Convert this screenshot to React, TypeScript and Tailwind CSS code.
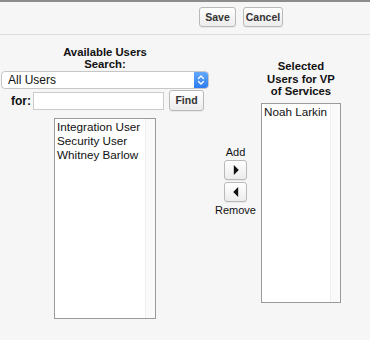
import React from "react";

const btn =
  "rounded-[3px] border border-[#b9b9b9] bg-gradient-to-b from-white to-[#ececec] text-[#333] font-bold text-[10.5px] leading-none flex items-center justify-center shadow-[0_1px_0_rgba(0,0,0,0.05)]";

function ListBox({ w, h, items }: { w: string; h: string; items: string[] }) {
  return (
    <div className={`${w} ${h} border border-[#9a9a9a] bg-white flex`}>
      <div className="flex-1 pl-[2px] pt-[1px] text-[11.7px] leading-[14px] text-[#111]">
        {items.map((t) => (
          <div key={t}>{t}</div>
        ))}
      </div>
      <div className="w-[10px] border-l border-[#efefef] bg-[#fafafa]" />
    </div>
  );
}

export default function App() {
  return (
    <div className="w-[370px] h-[340px] bg-[#f7f6f7] font-['Liberation_Sans',Arial,sans-serif] text-[#222] overflow-hidden">
      <div className="h-[2px] bg-[#8c8c8c]" />
      <div className="h-[33px] border-b border-[#dcdcdc] flex items-start pt-[5px] pl-[199px] gap-[7px]">
        <button className={`${btn} w-[37px] h-[20px]`}>Save</button>
        <button className={`${btn} w-[40px] h-[20px]`}>Cancel</button>
      </div>

      <div className="flex items-start mt-[11px]">
        {/* Left column */}
        <div className="w-[210px] flex flex-col items-center">
          <div className="text-[11.3px] font-bold leading-[12px] text-center text-[#111]">
            Available Users
            <br />
            Search:
          </div>
          <div className="w-full pl-[1px] pr-[1px] mt-[1px]">
            <div className="h-[18px] rounded-[4px] border border-[#c6c6c6] bg-white flex items-stretch overflow-hidden">
              <div className="flex-1 pl-[6px] text-[12px] leading-[16px] text-[#111]">All Users</div>
              <div className="w-[14px] bg-gradient-to-b from-[#62a8fa] to-[#2d7cf0] flex items-center justify-center">
                <svg width="8" height="12" viewBox="0 0 8 12" fill="none" stroke="white" strokeWidth="1.4" strokeLinecap="round" strokeLinejoin="round">
                  <path d="M1.5 4.5 L4 2 L6.5 4.5" />
                  <path d="M1.5 7.5 L4 10 L6.5 7.5" />
                </svg>
              </div>
            </div>
          </div>
          <div className="w-full flex items-center h-[21px] mt-[1px]">
            <div className="w-[22px] ml-[11px] text-[12px] font-bold text-[#111]">for:</div>
            <div className="w-[131px] h-[18px] border border-[#cccccc] bg-white" />
            <button className={`${btn} ml-[5px] w-[35px] h-[21px]`}>Find</button>
          </div>
          <div className="mt-[7px]">
            <ListBox w="w-[102px]" h="h-[201px]" items={["Integration User", "Security User", "Whitney Barlow"]} />
          </div>
        </div>

        {/* Middle column */}
        <div className="w-[51px] mt-[99px] flex flex-col items-center text-[11px] leading-[14px] text-[#111]">
          <div>Add</div>
          <button className={`${btn} mt-[1px] w-[23px] h-[20px]`}>
            <svg width="6" height="10" viewBox="0 0 6 10">
              <path d="M0.8 0 L5.8 5 L0.8 10 Z" fill="#111" />
            </svg>
          </button>
          <button className={`${btn} mt-[2px] w-[23px] h-[20px]`}>
            <svg width="6" height="10" viewBox="0 0 6 10">
              <path d="M5.2 0 L0.2 5 L5.2 10 Z" fill="#111" />
            </svg>
          </button>
          <div className="mt-[1px]">Remove</div>
        </div>

        {/* Right column */}
        <div className="w-[80px] mt-[14px] flex flex-col items-center">
          <div className="text-[11.3px] font-bold leading-[12.5px] text-center text-[#111] whitespace-nowrap">
            Selected
            <br />
            Users for VP
            <br />
            of Services
          </div>
          <div className="mt-[5.5px]">
            <ListBox w="w-[80px]" h="h-[200px]" items={["Noah Larkin"]} />
          </div>
        </div>
      </div>
    </div>
  );
}
